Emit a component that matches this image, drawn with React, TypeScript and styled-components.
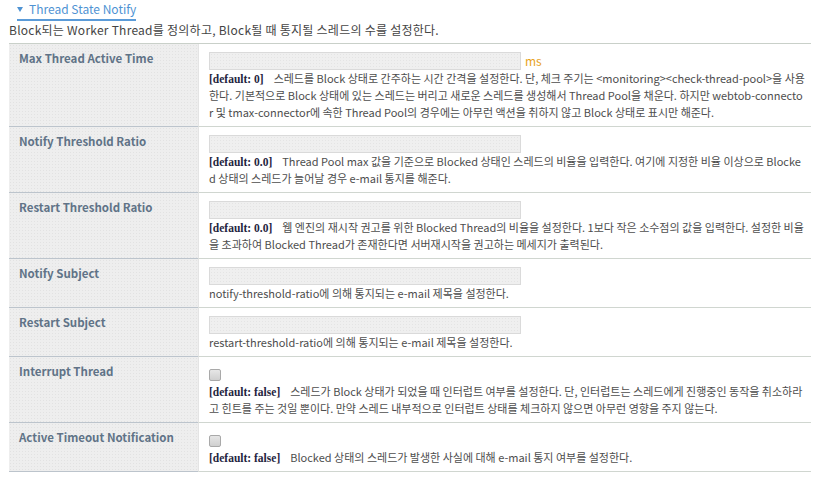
import React from "react";
import styled, { createGlobalStyle } from "styled-components";

const GlobalStyle = createGlobalStyle`
  html, body { margin: 0; padding: 0; background: #ffffff; }
  body {
    font-family: "Noto Sans CJK KR", "Noto Sans", sans-serif;
    color: #444444;
  }
  * { box-sizing: border-box; }
`;

const Page = styled.div`
  width: 819px;
  padding: 0 8px 0 9px;
`;

const TitleBar = styled.div`
  display: flex;
  padding-left: 8px;
`;

const Title = styled.h3`
  margin: 0;
  display: inline-flex;
  align-items: center;
  gap: 6px;
  padding: 1px 0 2px 0;
  border-bottom: 2px solid #5b9bd8;
  font-size: 12px;
  line-height: 16px;
  font-weight: 400;
  color: #4f93d3;
`;

const Caret = styled.span`
  width: 0;
  height: 0;
  border-left: 3.5px solid transparent;
  border-right: 3.5px solid transparent;
  border-top: 5px solid #4f93d3;
`;

const Intro = styled.p`
  margin: 0 0 5px 0;
  font-size: 12px;
  line-height: 17px;
  letter-spacing: 0.25px;
  color: #444444;
`;

const Table = styled.div`
  border-top: 1px solid #c9d0c9;
`;

const Row = styled.div`
  display: grid;
  grid-template-columns: 189px 1fr;
`;

const LabelCell = styled.div`
  padding: 6px 10px 5px 10px;
  background-color: #eeeeee;
  background-image: radial-gradient(#e2e2e2 0.6px, transparent 0.7px);
  background-size: 3px 3px;
  border-bottom: 1px solid #bcc4cc;
  font-size: 11.5px;
  line-height: 17px;
  font-weight: 700;
  color: #607387;
`;

const ValueCell = styled.div`
  padding: 7px 5px 5px 10px;
  border-bottom: 1px solid #d0d6d0;
  border-left: 1px solid #e4e4e4;
`;

const FieldLine = styled.div`
  display: flex;
  align-items: center;
  gap: 4px;
  height: 19px;
`;

const TextInput = styled.input`
  width: 312px;
  height: 18px;
  margin: 0;
  padding: 0 4px;
  border: 1px solid #dadada;
  background-color: #efefef;
  background-image: radial-gradient(#e4e4e4 0.6px, transparent 0.7px);
  background-size: 3px 3px;
  outline: none;
`;

const Unit = styled.span`
  font-size: 12px;
  color: #e8a21c;
`;

const Check = styled.input`
  appearance: none;
  -webkit-appearance: none;
  width: 12px;
  height: 12px;
  margin: 3px 0 0 0;
  border: 1px solid #a9a9a9;
  border-radius: 2px;
  background: linear-gradient(#e6e6e6, #cfcfcf);
`;

const Desc = styled.p`
  margin: 0;
  font-size: 11px;
  line-height: 17px;
  color: #4d4d4d;
  word-break: break-all;
`;

const Default = styled.span`
  font-family: "Liberation Serif", "DejaVu Serif", serif;
  font-size: 11.5px;
  line-height: 1;
  font-weight: 700;
  color: #1f2540;
  margin-right: 10px;
`;

type Item = {
  label: string;
  kind: "text" | "check";
  unit?: string;
  def?: string;
  text: string;
};

const items: Item[] = [
  {
    label: "Max Thread Active Time",
    kind: "text",
    unit: "ms",
    def: "[default: 0]",
    text:
      "스레드를 Block 상태로 간주하는 시간 간격을 설정한다. 단, 체크 주기는 <monitoring><check-thread-pool>을 사용한다. 기본적으로 Block 상태에 있는 스레드는 버리고 새로운 스레드를 생성해서 Thread Pool을 채운다. 하지만 webtob-connector 및 tmax-connector에 속한 Thread Pool의 경우에는 아무런 액션을 취하지 않고 Block 상태로 표시만 해준다.",
  },
  {
    label: "Notify Threshold Ratio",
    kind: "text",
    def: "[default: 0.0]",
    text:
      "Thread Pool max 값을 기준으로 Blocked 상태인 스레드의 비율을 입력한다. 여기에 지정한 비율 이상으로 Blocked 상태의 스레드가 늘어날 경우 e-mail 통지를 해준다.",
  },
  {
    label: "Restart Threshold Ratio",
    kind: "text",
    def: "[default: 0.0]",
    text:
      "웹 엔진의 재시작 권고를 위한 Blocked Thread의 비율을 설정한다. 1보다 작은 소수점의 값을 입력한다. 설정한 비율을 초과하여 Blocked Thread가 존재한다면 서버재시작을 권고하는 메세지가 출력된다.",
  },
  {
    label: "Notify Subject",
    kind: "text",
    text: "notify-threshold-ratio에 의해 통지되는 e-mail 제목을 설정한다.",
  },
  {
    label: "Restart Subject",
    kind: "text",
    text: "restart-threshold-ratio에 의해 통지되는 e-mail 제목을 설정한다.",
  },
  {
    label: "Interrupt Thread",
    kind: "check",
    def: "[default: false]",
    text:
      "스레드가 Block 상태가 되었을 때 인터럽트 여부를 설정한다. 단, 인터럽트는 스레드에게 진행중인 동작을 취소하라고 힌트를 주는 것일 뿐이다. 만약 스레드 내부적으로 인터럽트 상태를 체크하지 않으면 아무런 영향을 주지 않는다.",
  },
  {
    label: "Active Timeout Notification",
    kind: "check",
    def: "[default: false]",
    text: "Blocked 상태의 스레드가 발생한 사실에 대해 e-mail 통지 여부를 설정한다.",
  },
];

export default function App() {
  return (
    <Page>
      <GlobalStyle />
      <TitleBar>
        <Title>
          <Caret />
          Thread State Notify
        </Title>
      </TitleBar>
      <Intro>Block되는 Worker Thread를 정의하고, Block될 때 통지될 스레드의 수를 설정한다.</Intro>
      <Table>
        {items.map((it) => (
          <Row key={it.label}>
            <LabelCell>{it.label}</LabelCell>
            <ValueCell>
              <FieldLine>
                {it.kind === "text" ? <TextInput type="text" /> : <Check type="checkbox" />}
                {it.unit && <Unit>{it.unit}</Unit>}
              </FieldLine>
              <Desc>
                {it.def && <Default>{it.def}</Default>}
                {it.text}
              </Desc>
            </ValueCell>
          </Row>
        ))}
      </Table>
    </Page>
  );
}
